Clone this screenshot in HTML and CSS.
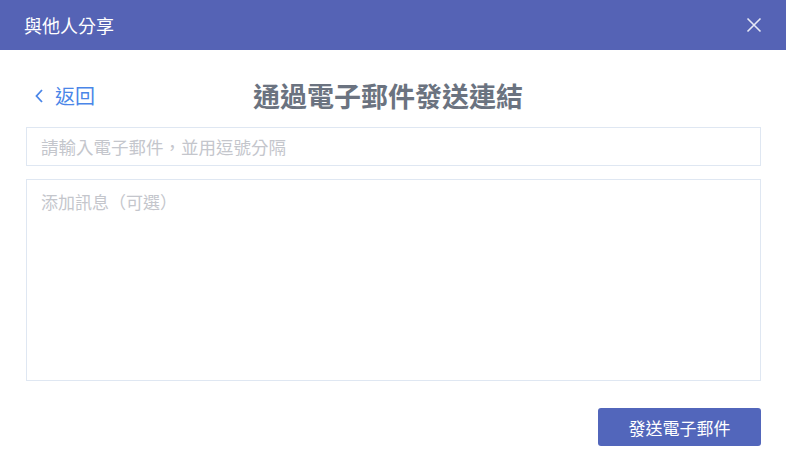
FILE: index.html
```html
<!DOCTYPE html>
<html lang="zh-Hant">
<head>
<meta charset="utf-8">
<link rel="stylesheet" href="styles.css">
</head>
<body>
<div class="dialog">
  <div class="header">
    <span class="header-title">與他人分享</span>
    <svg class="close" width="16" height="16" viewBox="0 0 16 16"><path d="M1.5 1.5L14.5 14.5M14.5 1.5L1.5 14.5" stroke="#e6e8f5" stroke-width="1.6" fill="none"/></svg>
  </div>
  <div class="body">
    <div class="topbar">
      <a class="back"><svg width="10" height="16" viewBox="0 0 10 16"><path d="M8 2L2.5 8L8 14" stroke="#4a86e8" stroke-width="1.8" fill="none"/></svg><span>返回</span></a>
      <h1 class="title">通過電子郵件發送連結</h1>
    </div>
    <div class="field input">請輸入電子郵件，並用逗號分隔</div>
    <div class="field textarea">添加訊息（可選）</div>
    <div class="actions">
      <button class="send">發送電子郵件</button>
    </div>
  </div>
</div>
</body>
</html>
```
FILE: styles.css
```css
* { box-sizing: border-box; }
html, body { margin: 0; padding: 0; background: #fff; }
body { font-family: "Noto Sans CJK TC", "Noto Sans CJK SC", sans-serif; }
.dialog { width: 786px; height: 473px; background: #fff; }
.header {
  height: 50px;
  background: #5563b5;
  display: flex;
  align-items: center;
  justify-content: space-between;
  padding: 0 24px 0 24px;
}
.header-title { color: #fff; font-size: 18px; line-height: 22px; }
.close { display: block; }
.body { padding: 0 25px 0 26px; }
.topbar {
  height: 77px;
  padding-top: 14px;
  display: flex;
  align-items: center;
}
.back {
  display: flex;
  align-items: center;
  gap: 11px;
  color: #4a86e8;
  font-size: 20px;
  line-height: 24px;
  padding-left: 8px;
}
.back svg { display: block; }
.title {
  margin: 0 0 0 158px;
  font-size: 27px;
  font-weight: 700;
  color: #6b7380;
  line-height: 34px;
}
.field {
  border: 1px solid #dfe7f2;
  color: #c4c6cc;
  padding: 0 14px;
}
.input { height: 39px; line-height: 37px; font-size: 17.5px; }
.textarea { height: 202px; margin-top: 13px; padding-top: 10px; line-height: 24px; font-size: 17px; }
.actions { display: flex; justify-content: flex-end; margin-top: 27px; }
.send {
  width: 163px;
  height: 38px;
  background: #5266bb;
  color: #fff;
  border: none;
  border-radius: 3px;
  font-family: inherit;
  font-size: 17px;
  padding: 0;
}
```
